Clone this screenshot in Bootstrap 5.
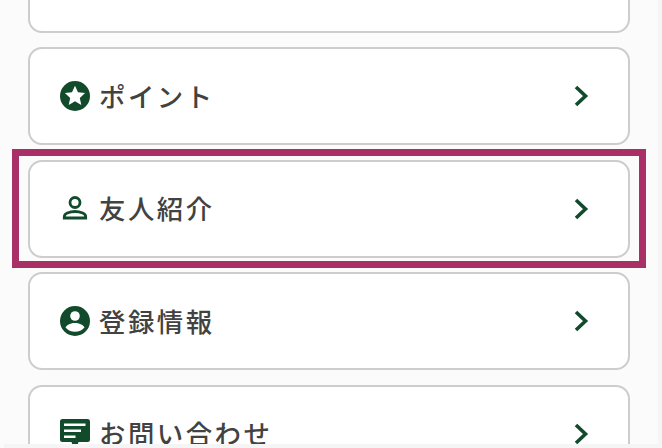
<!DOCTYPE html>
<html lang="ja">
<head>
<meta charset="utf-8">
<link href="https://cdn.jsdelivr.net/npm/bootstrap@5.3.0/dist/css/bootstrap.min.css" rel="stylesheet">
<style>
html,body{height:448px;overflow:hidden;background:#fbfbfb;}
body{font-family:"Noto Sans CJK JP","Liberation Sans",sans-serif;position:relative;}
.menu-list{margin-top:-65.5px;padding-left:28px;padding-right:32px;gap:14.5px;}
.menu-item{height:98px;padding:0 38px 0 28.5px;background:#fff;border:2px solid #cdcdcd;border-radius:14px;color:#424242;font-size:26.4px;font-weight:500;letter-spacing:2.5px;line-height:1;text-decoration:none;}
.menu-icon{width:32px;height:32px;margin-right:8.500px;flex:none;}
.menu-arrow{width:16px;height:22px;flex:none;}
.focus-frame{position:absolute;left:12px;top:149px;width:634px;height:119px;border:7px solid #a83067;pointer-events:none;}
.bottom-bar{position:absolute;left:4px;right:0;top:444px;height:4px;background:#f5f5f5;}
.side-bar{position:absolute;right:0;top:0;width:4px;height:448px;background:#f5f5f5;}
</style>
</head>
<body>
<div class="side-bar"></div>
<div class="menu-list d-flex flex-column">
<a class="menu-item d-flex align-items-center" href="#"><span class="flex-grow-1"></span></a>
<a class="menu-item d-flex align-items-center" href="#">
<svg class="menu-icon" viewBox="0 0 32 32"><circle cx="16" cy="16" r="15" fill="#124a2c"/><path d="M16 5.800l3 6.500 7.100.8-5.300 4.800 1.500 7-6.300-3.600-6.300 3.600 1.500-7-5.300-4.800 7.100-.8z" fill="#fff"/></svg>
<span class="flex-grow-1">ポイント</span>
<svg class="menu-arrow" viewBox="0 0 16 22"><path d="M2 2l9.500 9-9.500 9" fill="none" stroke="#124a2c" stroke-width="3.600"/></svg>
</a>
<a class="menu-item d-flex align-items-center" href="#">
<svg class="menu-icon" viewBox="0 0 32 32"><circle cx="16" cy="9.500" r="5" fill="none" stroke="#124a2c" stroke-width="2.800"/><path d="M5.300 25v-1.200c0-1.800 1-3 3-3.800 2.500-1 5-1.500 7.700-1.500s5.200.5 7.700 1.500c2 .8 3 2 3 3.800V25z" fill="none" stroke="#124a2c" stroke-width="2.800"/></svg>
<span class="flex-grow-1">友人紹介</span>
<svg class="menu-arrow" viewBox="0 0 16 22"><path d="M2 2l9.500 9-9.500 9" fill="none" stroke="#124a2c" stroke-width="3.600"/></svg>
</a>
<a class="menu-item d-flex align-items-center" href="#">
<svg class="menu-icon" viewBox="0 0 32 32"><circle cx="16" cy="16" r="15" fill="#124a2c"/><circle cx="16" cy="11" r="4.800" fill="#fff"/><path d="M6.500 22.500c1.500-3 5.500-4.500 9.500-4.500s8 1.500 9.500 4.500c-2.200 2.700-5.700 4.300-9.500 4.300s-7.300-1.600-9.500-4.300z" fill="#fff"/></svg>
<span class="flex-grow-1">登録情報</span>
<svg class="menu-arrow" viewBox="0 0 16 22"><path d="M2 2l9.500 9-9.500 9" fill="none" stroke="#124a2c" stroke-width="3.600"/></svg>
</a>
<a class="menu-item d-flex align-items-center" href="#">
<svg class="menu-icon" viewBox="0 0 32 32"><path d="M3.500 1h25a2.500 2.500 0 0 1 2.500 2.500v18a2.500 2.500 0 0 1-2.500 2.500h-9l-1 3h-5l-1-3h-9A2.500 2.500 0 0 1 1 21.500v-18A2.500 2.500 0 0 1 3.500 1z" fill="#124a2c"/><path d="M5 5.500h21.500v2.500H5zM5 11.500h17v2.500H5zM5 17.500h11.500v2.500H5z" fill="#fff"/></svg>
<span class="flex-grow-1">お問い合わせ</span>
<svg class="menu-arrow" viewBox="0 0 16 22"><path d="M2 2l9.500 9-9.500 9" fill="none" stroke="#124a2c" stroke-width="3.600"/></svg>
</a>
</div>
<div class="focus-frame"></div>
<div class="bottom-bar"></div>
</body>
</html>
